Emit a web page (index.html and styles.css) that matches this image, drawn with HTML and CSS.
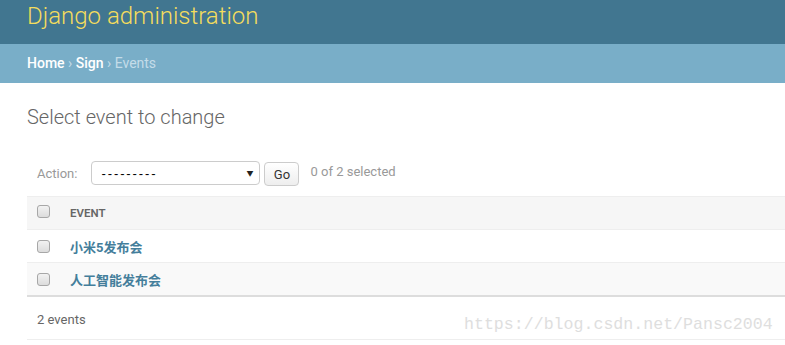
FILE: index.html
```html
<!DOCTYPE html>
<html lang="en">
<head>
    <meta charset="UTF-8">
    <meta name="viewport" content="width=device-width, initial-scale=1.0">
    <link rel="stylesheet" href="styles.css">
    <title>Select event to change | Django site admin</title>
</head>
<body>
    <!-- Header -->
    <div class="header">
        <h1 class="site-name">Django administration</h1>
    </div>

    <!-- Breadcrumbs -->
    <div class="breadcrumbs">
        <a href="#">Home</a> &rsaquo; <a href="#">Sign</a> &rsaquo; Events
    </div>

    <div class="content">
        <h1 class="page-title">Select event to change</h1>

        <div class="changelist">
            <div class="actions">
                <label class="action-label">Action:</label>
                <div class="select-box">
                    <span class="dashes">---------</span>
                    <span class="arrow">&#9660;</span>
                </div>
                <button class="go-button">Go</button>
                <span class="action-counter">0 of 2 selected</span>
            </div>

            <table class="result-list">
                <thead>
                    <tr>
                        <th class="check-col"><input type="checkbox" class="check"></th>
                        <th>Event</th>
                    </tr>
                </thead>
                <tbody>
                    <tr class="row1">
                        <td class="check-col"><input type="checkbox" class="check"></td>
                        <th><a href="#">小米5发布会</a></th>
                    </tr>
                    <tr class="row2">
                        <td class="check-col"><input type="checkbox" class="check"></td>
                        <th><a href="#">人工智能发布会</a></th>
                    </tr>
                </tbody>
            </table>

            <p class="paginator">
                2 events
                <span class="watermark">https://blog.csdn.net/Pansc2004</span>
            </p>
        </div>
    </div>
</body>
</html>
```

FILE: styles.css
```css
/* Reset */
body, h1, p {
    margin: 0;
    padding: 0;
}

body {
    background-color: #fff;
    font-family: Roboto, "Noto Sans CJK SC", "Liberation Sans", sans-serif;
    color: #333;
    font-size: 13px;
    overflow: hidden;
}

a {
    text-decoration: none;
}

/* Header bar */
.header {
    background: #417690;
    height: 44px;
    padding: 0 27px;
    box-sizing: border-box;
}

.site-name {
    font-size: 24px;
    font-weight: 300;
    color: #f5dd5d;
    line-height: 32px;
}

/* Breadcrumbs */
.breadcrumbs {
    background: #79aec8;
    height: 39px;
    line-height: 39px;
    padding: 0 27px;
    font-size: 14px;
    color: #c4dce8;
}

.breadcrumbs a {
    color: #fff;
    font-weight: 500;
}

/* Main content */
.content {
    padding: 22px 0 0 27px;
}

.page-title {
    font-size: 20px;
    font-weight: 300;
    color: #666;
    line-height: 24px;
    margin-bottom: 29px;
}

/* Actions */
.actions {
    display: flex;
    align-items: center;
    height: 30px;
    padding-left: 10px;
    color: #999;
    margin-bottom: 8px;
}

.action-label {
    margin-right: 14px;
}

.select-box {
    display: flex;
    justify-content: space-between;
    align-items: center;
    width: 169px;
    height: 24px;
    box-sizing: border-box;
    border: 1px solid #ccc;
    border-radius: 4px;
    padding: 0 6px 0 9px;
    color: #000;
}

.select-box .dashes {
    font-family: "Liberation Sans", sans-serif;
    font-size: 13px;
    letter-spacing: 1.9px;
}

.select-box .arrow {
    font-size: 7px;
    color: #222;
}

.go-button {
    margin-left: 4px;
    height: 24px;
    width: 35px;
    border: 1px solid #ccc;
    border-radius: 4px;
    background: linear-gradient(#fff, #eee);
    font-family: Roboto, sans-serif;
    font-size: 13px;
    color: #333;
    padding: 0;
    margin-top: 2px;
}

.action-counter {
    margin-left: 11px;
    margin-top: -3px;
}

/* Result table */
.result-list {
    width: 100%;
    border-collapse: collapse;
}

.result-list th,
.result-list td {
    height: 32px;
    padding: 0 10px;
    text-align: left;
    border-bottom: 1px solid #eee;
}

.result-list thead th {
    background: #f6f6f6;
    border-top: 1px solid #eee;
    font-size: 11.5px;
    font-weight: 600;
    text-transform: uppercase;
    color: #666;
}

.result-list .check-col {
    width: 13px;
}

.result-list tbody th a {
    color: #447e9b;
    font-weight: 700;
    font-size: 13px;
}

.row2 td,
.row2 th {
    background: #f9f9f9;
}

.result-list tbody tr:last-child td,
.result-list tbody tr:last-child th {
    border-bottom: 2px solid #ddd;
}

.check {
    appearance: none;
    -webkit-appearance: none;
    display: block;
    width: 13px;
    height: 13px;
    margin: 0;
    box-sizing: border-box;
    border: 1px solid #a7a7a7;
    border-radius: 3px;
    background: linear-gradient(#f2f2f2, #dcdcdc);
}

thead .check {
    margin-top: -3px;
}

/* Paginator */
.paginator {
    position: relative;
    height: 42px;
    line-height: 46px;
    padding-left: 10px;
    color: #666;
    border-bottom: 1px solid #eee;
}

.watermark {
    position: absolute;
    left: 437px;
    top: 5px;
    font-family: "Liberation Mono", monospace;
    font-size: 16.6px;
    color: #dedede;
}
```
